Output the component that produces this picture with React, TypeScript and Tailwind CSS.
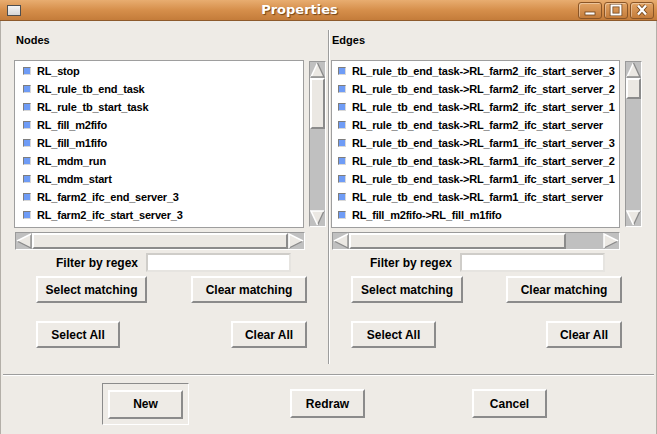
import React from 'react';

const nodes = [
  'RL_stop',
  'RL_rule_tb_end_task',
  'RL_rule_tb_start_task',
  'RL_fill_m2fifo',
  'RL_fill_m1fifo',
  'RL_mdm_run',
  'RL_mdm_start',
  'RL_farm2_ifc_end_server_3',
  'RL_farm2_ifc_start_server_3',
];

const edges = [
  'RL_rule_tb_end_task->RL_farm2_ifc_start_server_3',
  'RL_rule_tb_end_task->RL_farm2_ifc_start_server_2',
  'RL_rule_tb_end_task->RL_farm2_ifc_start_server_1',
  'RL_rule_tb_end_task->RL_farm2_ifc_start_server',
  'RL_rule_tb_end_task->RL_farm1_ifc_start_server_3',
  'RL_rule_tb_end_task->RL_farm1_ifc_start_server_2',
  'RL_rule_tb_end_task->RL_farm1_ifc_start_server_1',
  'RL_rule_tb_end_task->RL_farm1_ifc_start_server',
  'RL_fill_m2fifo->RL_fill_m1fifo',
];

const raised = 'border-2 border-t-white border-l-white border-r-[#8b8b8b] border-b-[#8b8b8b]';

// scrollbar arrow, drawn as a raised triangle on the trough
const Arrow: React.FC<{ dir: 'up' | 'down' | 'left' | 'right' }> = ({ dir }) => {
  if (dir === 'up') {
    return (
      <svg width="15" height="16" viewBox="0 0 15 16" className="block shrink-0">
        <polygon points="7.5,1 14,15 1,15" fill="#ebe8e3" />
        <polyline points="1,15 7.5,1" stroke="#ffffff" strokeWidth="1.5" fill="none" />
        <polyline points="7.5,1 14,15 1,15" stroke="#8a8a8a" strokeWidth="1.3" fill="none" />
      </svg>
    );
  }
  if (dir === 'down') {
    return (
      <svg width="15" height="16" viewBox="0 0 15 16" className="block shrink-0">
        <polygon points="1,1 14,1 7.5,15" fill="#ebe8e3" />
        <polyline points="7.5,15 14,1" stroke="#8a8a8a" strokeWidth="1.3" fill="none" />
        <polyline points="7.5,15 1,1 14,1" stroke="#ffffff" strokeWidth="1.5" fill="none" />
      </svg>
    );
  }
  if (dir === 'left') {
    return (
      <svg width="16" height="16" viewBox="0 0 16 16" className="block shrink-0">
        <polygon points="1,8 15,1 15,15" fill="#ebe8e3" />
        <polyline points="1,8 15,15 15,1" stroke="#8a8a8a" strokeWidth="1.3" fill="none" />
        <polyline points="15,1 1,8" stroke="#ffffff" strokeWidth="1.5" fill="none" />
      </svg>
    );
  }
  return (
    <svg width="16" height="16" viewBox="0 0 16 16" className="block shrink-0">
      <polygon points="1,1 15,8 1,15" fill="#ebe8e3" />
      <polyline points="1,15 15,8" stroke="#8a8a8a" strokeWidth="1.3" fill="none" />
      <polyline points="1,15 1,1 15,8" stroke="#ffffff" strokeWidth="1.5" fill="none" />
    </svg>
  );
};

const VScroll: React.FC<{ thumb: string }> = ({ thumb }) => (
  <div className="w-[17px] h-[166px] mt-[1px] flex flex-col bg-[#c0c0c0] border border-t-[#9a9a9a] border-l-[#9a9a9a] border-r-white border-b-white">
    <Arrow dir="up" />
    <div className={`${thumb} bg-[#ebe8e3] ${raised}`} />
    <div className="flex-1" />
    <Arrow dir="down" />
  </div>
);

const HScroll: React.FC<{ className: string; rest: string }> = ({ className, rest }) => (
  <div className={`h-[18px] flex bg-[#c0c0c0] border border-t-[#9a9a9a] border-l-[#9a9a9a] border-r-white border-b-white ${className}`}>
    <Arrow dir="left" />
    <div className={`flex-1 bg-[#ebe8e3] ${raised}`} />
    <div className={rest} />
    <Arrow dir="right" />
  </div>
);

const ListBox: React.FC<{ items: string[]; className: string }> = ({ items, className }) => (
  <div className={`h-[168px] bg-white border border-[#9e9e9e] overflow-hidden pt-[1px] ${className}`}>
    {items.map((it) => (
      <div key={it} className="h-[18px] flex items-center gap-[6px] whitespace-nowrap">
        <span className="w-[8px] h-[8px] shrink-0 bg-[#6f9cf6] border border-t-[#7d7d7d] border-l-[#7d7d7d] border-r-[#d8d8d8] border-b-[#d8d8d8]" />
        <span className="text-[11px] font-bold tracking-[-0.2px] leading-[18px]">{it}</span>
      </div>
    ))}
  </div>
);

const Btn: React.FC<{ label: string; className: string }> = ({ label, className }) => (
  <button className={`flex items-center justify-center bg-[#eeebe6] text-[12px] font-bold text-black ${raised} ${className}`}>
    {label}
  </button>
);

const Filter: React.FC<{ labelW: string }> = ({ labelW }) => (
  <div className="mt-[3px] h-[19px] flex items-center">
    <div className={`${labelW} text-right text-[12px] font-bold`}>Filter by regex</div>
    <div className="ml-[8px] w-[145px] h-[19px] bg-white border-2 border-t-[#cfcdc9] border-l-[#cfcdc9] border-r-[#e6e4e0] border-b-[#e6e4e0]" />
  </div>
);

const TitleButton: React.FC<{ children: React.ReactNode }> = ({ children }) => (
  <div className="w-[24px] h-[17px] rounded-[3px] border border-[#8a5526] bg-linear-to-b from-[#e2a465] to-[#c47c3a] shadow-[inset_1px_1px_0_rgba(255,255,255,0.35)] flex items-center justify-center">
    {children}
  </div>
);

const TitleBar: React.FC = () => (
  <div className="h-[21px] shrink-0 flex items-center border-b border-[#8d5a2c] bg-linear-to-b from-[#e8ad70] via-[#d68f4b] to-[#c47c3a]">
    <div className="ml-[7px] w-[14px] h-[11px] border border-[#4f4f4f] bg-linear-to-b from-[#f4f4f4] to-[#d6d6d6]" />
    <div className="flex-1 text-center text-white text-[13px] font-bold font-['DejaVu_Sans',sans-serif] leading-[20px] [text-shadow:1px_1px_1px_rgba(90,50,10,0.8)]">
      Properties
    </div>
    <div className="flex gap-[2px] mr-[3px]">
      <TitleButton>
        <svg width="14" height="12" viewBox="0 0 14 12">
          <rect x="2" y="8" width="10" height="3" fill="#ffffff" stroke="#6b3f17" strokeWidth="0.8" />
        </svg>
      </TitleButton>
      <TitleButton>
        <svg width="14" height="12" viewBox="0 0 14 12">
          <rect x="2.5" y="1.5" width="9" height="9" fill="none" stroke="#6b3f17" strokeWidth="3.5" />
          <rect x="2.5" y="1.5" width="9" height="9" fill="none" stroke="#ffffff" strokeWidth="2" />
        </svg>
      </TitleButton>
      <TitleButton>
        <svg width="14" height="12" viewBox="0 0 14 12">
          <path d="M3 1.5 L11 10.5 M11 1.5 L3 10.5" stroke="#6b3f17" strokeWidth="4" />
          <path d="M3 1.5 L11 10.5 M11 1.5 L3 10.5" stroke="#ffffff" strokeWidth="2.4" />
        </svg>
      </TitleButton>
    </div>
  </div>
);

const App: React.FC = () => {
  return (
    <div className="w-[657px] h-[434px] flex flex-col bg-[#eeebe6] font-['Liberation_Sans',Arial,sans-serif] text-black overflow-hidden">
      <TitleBar />
      <div className="flex-1 flex flex-col border-x border-[#b3afa8]">
        <div className="h-[353px] shrink-0 flex">
          {/* Nodes */}
          <div className="w-[327px] flex flex-col">
            <div className="mt-[12px] ml-[15px] h-[14px] text-[11px] font-bold leading-[14px]">Nodes</div>
            <div className="mt-[13px] flex">
              <ListBox items={nodes} className="ml-[13px] w-[290px] pl-[8px]" />
              <div className="ml-[5px]">
                <VScroll thumb="h-[51px]" />
              </div>
            </div>
            <HScroll className="mt-[4px] ml-[14px] w-[290px]" rest="w-0" />
            <Filter labelW="w-[137px]" />
            <div className="mt-[4px] flex">
              <Btn label="Select matching" className="ml-[35px] w-[111px] h-[27px]" />
              <Btn label="Clear matching" className="ml-[44px] w-[116px] h-[27px]" />
            </div>
            <div className="mt-[18px] flex">
              <Btn label="Select All" className="ml-[35px] w-[84px] h-[27px]" />
              <Btn label="Clear All" className="ml-[111px] w-[76px] h-[27px]" />
            </div>
          </div>

          <div className="mt-[9px] h-[334px] w-[2px] border-l border-[#9d9d9d] bg-white" />

          {/* Edges */}
          <div className="flex-1 flex flex-col">
            <div className="mt-[12px] ml-[2px] h-[14px] text-[11px] font-bold leading-[14px]">Edges</div>
            <div className="mt-[13px] flex">
              <ListBox items={edges} className="ml-[1px] w-[289px] pl-[6px]" />
              <div className="ml-[5px]">
                <VScroll thumb="h-[21px]" />
              </div>
            </div>
            <HScroll className="mt-[4px] ml-[2px] w-[288px]" rest="w-[37px]" />
            <Filter labelW="w-[122px]" />
            <div className="mt-[4px] flex">
              <Btn label="Select matching" className="ml-[21px] w-[112px] h-[27px]" />
              <Btn label="Clear matching" className="ml-[43px] w-[116px] h-[27px]" />
            </div>
            <div className="mt-[18px] flex">
              <Btn label="Select All" className="ml-[21px] w-[85px] h-[27px]" />
              <Btn label="Clear All" className="ml-[110px] w-[76px] h-[27px]" />
            </div>
          </div>
        </div>

        <div className="mx-[2px] h-[2px] border-t border-[#9d9d9d] bg-white" />

        <div className="mt-[7px] flex items-start">
          <div className="ml-[101px] w-[87px] h-[42px] flex items-center justify-center border border-t-[#8b8b8b] border-l-[#8b8b8b] border-r-white border-b-white">
            <Btn label="New" className="w-[75px] h-[29px]" />
          </div>
          <Btn label="Redraw" className="ml-[101px] mt-[6px] w-[75px] h-[29px]" />
          <Btn label="Cancel" className="ml-[107px] mt-[6px] w-[75px] h-[29px]" />
        </div>
      </div>
    </div>
  );
};

export default App;
